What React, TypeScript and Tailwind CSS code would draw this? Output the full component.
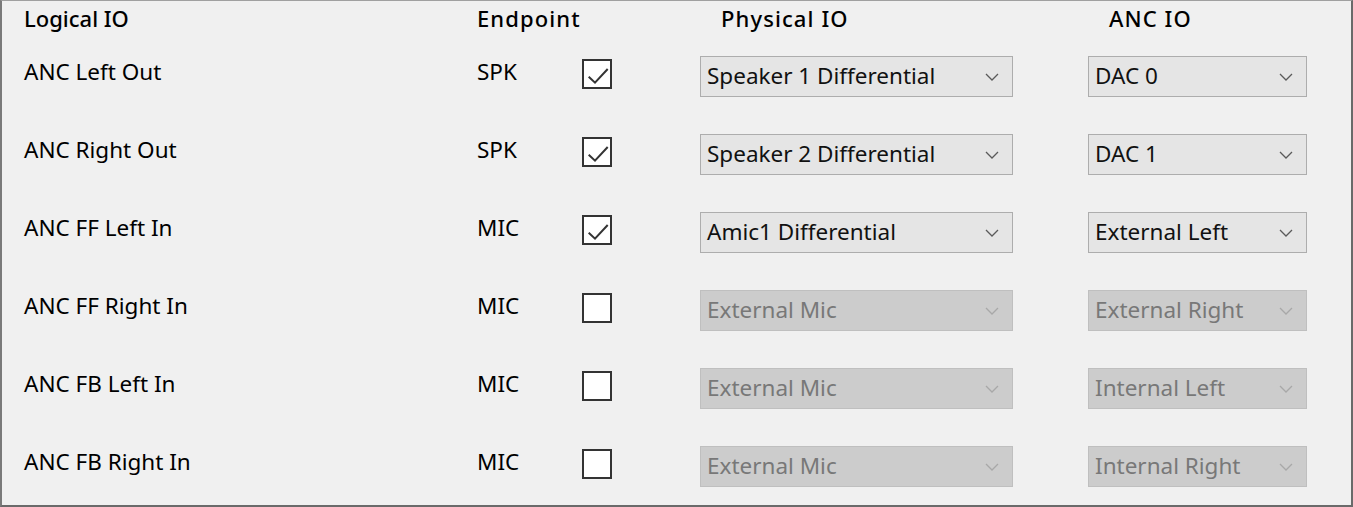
import React from "react";

type Row = {
  label: string;
  ep: string;
  checked: boolean;
  phys: string;
  anc: string;
};

const rows: Row[] = [
  { label: "ANC Left Out", ep: "SPK", checked: true, phys: "Speaker 1 Differential", anc: "DAC 0" },
  { label: "ANC Right Out", ep: "SPK", checked: true, phys: "Speaker 2 Differential", anc: "DAC 1" },
  { label: "ANC FF Left In", ep: "MIC", checked: true, phys: "Amic1 Differential", anc: "External Left" },
  { label: "ANC FF Right In", ep: "MIC", checked: false, phys: "External Mic", anc: "External Right" },
  { label: "ANC FB Left In", ep: "MIC", checked: false, phys: "External Mic", anc: "Internal Left" },
  { label: "ANC FB Right In", ep: "MIC", checked: false, phys: "External Mic", anc: "Internal Right" },
];

function Chevron({ disabled }: { disabled: boolean }) {
  return (
    <svg width="14" height="8" viewBox="0 0 14 8" className="shrink-0">
      <path
        d="M1 1 L7 7 L13 1"
        fill="none"
        stroke={disabled ? "#a8a8a8" : "#5a5a5a"}
        strokeWidth="1.3"
      />
    </svg>
  );
}

function Combo({ value, width, enabled }: { value: string; width: string; enabled: boolean }) {
  return (
    <div
      className={
        "flex h-[41px] items-center justify-between border pl-[6px] pr-[13px] " +
        width +
        (enabled
          ? " border-[#adadad] bg-[#e5e5e5] text-[#111]"
          : " border-[#bfbfbf] bg-[#cccccc] text-[#787878]")
      }
    >
      <span className="leading-none">{value}</span>
      <Chevron disabled={!enabled} />
    </div>
  );
}

function Check({ checked }: { checked: boolean }) {
  return (
    <div className="mt-[3px] flex h-[30px] w-[30px] items-center justify-center border-2 border-[#333] bg-white">
      {checked && (
        <svg width="26" height="26" viewBox="0 0 26 26">
          <path d="M4.7 15.7 L11 21.7 L23.7 8" fill="none" stroke="#333" strokeWidth="2" />
        </svg>
      )}
    </div>
  );
}

export default function App() {
  return (
    <div
      className="h-[507px] w-[1353px] border-t border-l-2 border-r-2 border-b-2 border-t-[#a0a0a0] border-l-[#7a7a7a] border-r-[#6a6a6a] border-b-[#6a6a6a] bg-[#f0f0f0] text-black"
      style={{ fontFamily: '"Noto Sans", "Open Sans", sans-serif' }}
    >
      <div className="flex h-[55px] items-start pl-[22px] text-[22px] font-medium leading-[34px]">
        <div className="w-[453px]">Logical IO</div>
        <div className="w-[244px] tracking-[1.1px]">Endpoint</div>
        <div className="w-[388px] tracking-[1.1px]">Physical IO</div>
        <div className="tracking-[1.1px]">ANC IO</div>
      </div>
      {rows.map((r) => (
        <div key={r.label} className="flex h-[78px] items-start pl-[22px] text-[22.5px]">
          <div className="w-[453px] leading-[32px]">{r.label}</div>
          <div className="w-[105px] leading-[32px]">{r.ep}</div>
          <Check checked={r.checked} />
          <div className="w-[88px]" />
          <Combo value={r.phys} width="w-[313px]" enabled={r.checked} />
          <div className="w-[75px]" />
          <Combo value={r.anc} width="w-[219px]" enabled={r.checked} />
        </div>
      ))}
    </div>
  );
}
